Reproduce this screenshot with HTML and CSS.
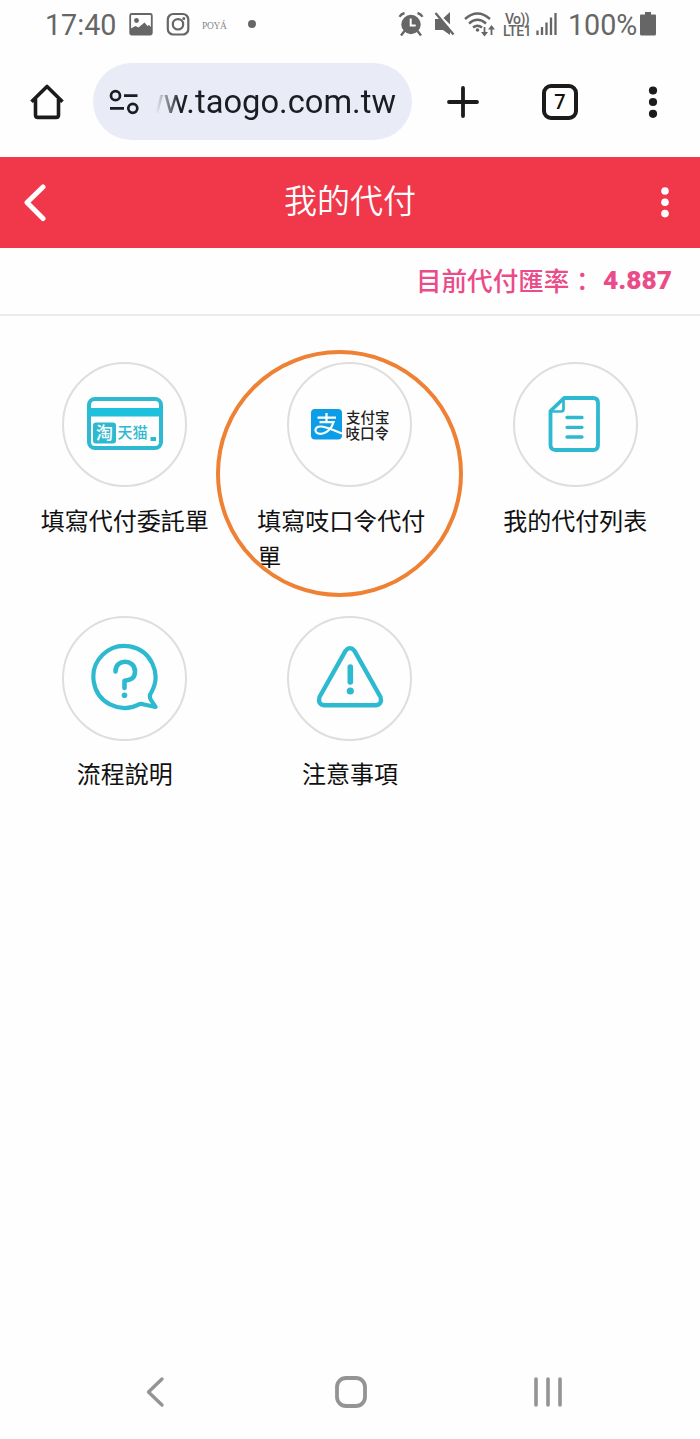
FILE: index.html
```html
<!DOCTYPE html>
<html lang="zh-Hant">
<head>
<meta charset="utf-8">
<title>我的代付</title>
<link rel="stylesheet" href="styles.css">
</head>
<body>
<div class="phone">
  <div class="status">
    <span class="clock">17:40</span>
    <svg class="s-image" width="24" height="24" viewBox="0 0 24 24"><rect x="1.2" y="2" width="21.6" height="20.6" rx="1.5" fill="none" stroke="#666" stroke-width="1.8"/><circle cx="7.5" cy="8.5" r="2.4" fill="#666"/><path d="M1 17 6.500 14 9.500 15.500 15.500 10.500 18.500 14 20 13 23 16v6H1z" fill="#666"/></svg>
    <svg class="s-insta" width="24" height="24" viewBox="0 0 24 24"><rect x="1.800" y="2" width="20.500" height="20.500" rx="5.500" fill="none" stroke="#666" stroke-width="2.200"/><circle cx="12" cy="12.300" r="5.200" fill="none" stroke="#666" stroke-width="2.200"/><circle cx="17.800" cy="6.500" r="1.500" fill="#666"/></svg>
    <span class="poya">POYÁ</span>
    <span class="dot"></span>
    <span class="spacer"></span>
    <svg class="s-alarm" width="26" height="26" viewBox="0 0 26 26"><g fill="none" stroke="#666" stroke-width="2.400"><path d="M1.500 5.800Q3 3 6.500 2M24.500 5.800Q23 3 19.500 2M6.500 20 3 24.500M19.500 20l3.500 4.500"/></g><circle cx="13" cy="13.500" r="9.700" fill="#666"/><path d="M12.700 7.500v7h5" fill="none" stroke="#fff" stroke-width="2"/></svg>
    <svg class="s-mute" width="24" height="26" viewBox="0 0 24 26"><path d="M2 8h5l10 10v6l-7-5H2zM17 1v12.500L10.500 7z" fill="#666"/><path d="m2.500 2 18 21.500" stroke="#666" stroke-width="2.300"/></svg>
    <svg class="s-wifi" width="32" height="26" viewBox="0 0 32 26"><g fill="none" stroke="#666" stroke-width="2.400"><path d="M1 8Q13.500-3 26 8M5 12.500Q13.500 5 22 12.500M9 16.500q4.500-3.700 9 0"/><path d="M20.500 16v7M27.500 24v-7" stroke-width="1.800"/></g><circle cx="13.500" cy="19" r="1.800" fill="#666"/><path d="m17 21 3.500 4.500L24 21zM24 18.500 27.500 14l3.500 4.500z" fill="#666"/></svg>
    <span class="volte"><span>Vo))</span><span>LTE1</span></span>
    <svg class="s-signal" width="22" height="26" viewBox="0 0 22 26"><path d="M1.500 24v-4.500M6 24v-8M10.500 24V11.500M15 24V6.500M19.500 24V2" stroke="#666" stroke-width="2.300"/></svg>
    <span class="percent">100%</span>
    <svg class="s-battery" width="16" height="26" viewBox="0 0 16 26"><path d="M1 3.500h4V1h6v2.500h4a1 1 0 0 1 1 1V23a1.500 1.500 0 0 1-1.500 1.500h-13A1.500 1.500 0 0 1 0 23V4.500a1 1 0 0 1 1-1z" fill="#666"/></svg>
  </div>

  <div class="browser">
    <svg class="b-home" width="38" height="38" viewBox="0 0 38 38"><path d="M3.500 18.800 19 3.500l15.500 15.300M7.500 16v16q0 2.400 2.400 2.400h18.200q2.400 0 2.400-2.400V16" fill="none" stroke="#1b1b1b" stroke-width="3.600" stroke-linejoin="round"/></svg>
    <div class="address">
      <svg width="30" height="26" viewBox="0 0 30 26"><g fill="none" stroke="#1b1d24" stroke-width="2.700"><circle cx="6.500" cy="6.700" r="4.500"/><circle cx="23.800" cy="19.300" r="4.500"/><path d="M15 6.700h13.500M1 19.300h14"/></g></svg>
      <span class="url">www.taogo.com.tw</span>
    </div>
    <svg class="b-plus" width="32" height="32" viewBox="0 0 32 32"><path d="M16 2v28M2 16h28" stroke="#1b1b1b" stroke-width="3.800" stroke-linecap="round"/></svg>
    <span class="tabs">7</span>
    <svg class="b-more" width="10" height="34" viewBox="0 0 10 34"><g fill="#1b1b1b"><circle cx="5" cy="5.500" r="4.100"/><circle cx="5" cy="17" r="4.100"/><circle cx="5" cy="28.800" r="4.100"/></g></svg>
  </div>

  <header class="title-bar">
    <svg width="24" height="40" viewBox="0 0 24 40"><path d="M21 4 5 19.500 21 35.500" fill="none" stroke="#fff" stroke-width="5" stroke-linecap="round" stroke-linejoin="round"/></svg>
    <h1>我的代付</h1>
    <svg width="10" height="34" viewBox="0 0 10 34"><g fill="#fff"><circle cx="5" cy="5" r="3.800"/><circle cx="5" cy="16.300" r="3.800"/><circle cx="5" cy="27.600" r="3.800"/></g></svg>
  </header>

  <div class="rate"><span>目前代付匯率：</span><b>4.887</b></div>

  <main class="menu">
    <div class="tile">
      <div class="disc">
        <svg width="76" height="58" viewBox="0 0 76 58"><rect x="2" y="3" width="72" height="49" rx="6" fill="none" stroke="#2dbad0" stroke-width="4"/><path d="M2 12h72v8.500H2z" fill="#1fc0dc"/><rect x="6" y="26.500" width="23" height="21" rx="3" fill="#2dbad0"/><text class="tao" x="9" y="43">淘</text><text class="tmall" x="30.500" y="42">天猫</text><path d="M63.500 41h5.500v4h-5.500z" fill="#2dbad0"/></svg>
      </div>
      <span class="label">填寫代付委託單</span>
    </div>
    <div class="tile">
      <div class="disc">
        <svg width="80" height="36" viewBox="0 0 80 36"><rect x="1" y="2" width="31" height="30.500" rx="4" fill="#0b9de5"/><path d="M7.500 10.700h18.500M16.500 6v9M9.500 15.200h14C22 20.500 17 26.800 10.500 26.800c-7 0-6.500-7.300 0-7.300 6 0 12 3.500 21.500 7" fill="none" stroke="#fff" stroke-width="2.200"/><text class="pay" x="36" y="15.700">支付宝</text><text class="pay" x="35.500" y="31.500">吱口令</text></svg>
      </div>
      <span class="label">填寫吱口令代付單</span>
    </div>
    <div class="tile">
      <div class="disc">
        <svg width="57" height="61" viewBox="0 0 57 61"><g fill="none" stroke="#2dbad0" stroke-width="3.800" stroke-linejoin="round" stroke-linecap="round"><path d="M17 4h29q5 0 5 5v42q0 5-5 5H8.500q-5 0-5-5V17z"/><path d="M16.500 5v10q0 2.500-2.500 2.500H5" stroke-width="2.700"/><path d="M20 23.500h15M20 33.300h15M20 43h15" stroke-width="3.300"/></g></svg>
      </div>
      <span class="label">我的代付列表</span>
    </div>
    <div class="tile">
      <div class="disc">
        <svg width="70" height="71" viewBox="0 0 70 71"><path d="M49 61.300A31 31 0 1 1 61.500 49Q58.500 53 61 57L65.500 64 54 61.500Q51 60.500 49 61.300Z" fill="none" stroke="#2dbad0" stroke-width="4.200" stroke-linejoin="round"/><path d="M25.500 28.500C25.500 15 45 16 45 28.500 45 36 40 37 34.500 37.800V45" fill="none" stroke="#2dbad0" stroke-width="4.600" stroke-linecap="round" stroke-linejoin="round"/><circle cx="34.500" cy="52.300" r="2.800" fill="#2dbad0"/></svg>
      </div>
      <span class="label">流程說明</span>
    </div>
    <div class="tile">
      <div class="disc">
        <svg width="70" height="67" viewBox="0 0 70 67"><path d="M30.500 5.800Q35 .5 39.500 5.800L65.500 52Q67.500 59.500 61 60.200H9Q2.500 59.500 4.500 52Z" fill="none" stroke="#2dbad0" stroke-width="4.400" stroke-linejoin="round"/><path d="M35.300 22v15" stroke="#2dbad0" stroke-width="5.600" stroke-linecap="round"/><circle cx="35.300" cy="46" r="3.600" fill="#2dbad0"/></svg>
      </div>
      <span class="label">注意事項</span>
    </div>
    <div class="highlight"></div>
  </main>

  <nav class="nav">
    <svg width="20" height="32" viewBox="0 0 20 32"><path d="M17 3 3.500 16 17 29" fill="none" stroke="#949494" stroke-width="3.400" stroke-linecap="round" stroke-linejoin="round"/></svg>
    <svg class="nav-home" width="32" height="32" viewBox="0 0 32 32"><rect x="2" y="2" width="28" height="28" rx="9" fill="none" stroke="#949494" stroke-width="3.800"/></svg>
    <svg width="30" height="32" viewBox="0 0 30 32"><path d="M3 3v26M15 3v26M27 3v26" stroke="#949494" stroke-width="3.600" stroke-linecap="round"/></svg>
  </nav>
</div>
</body>
</html>
```
FILE: styles.css
```css
* { box-sizing: border-box; }
body { margin: 0; background: #fefefe; color: #111; font-family: Roboto, "Noto Sans CJK TC", sans-serif; }
svg { display: block; flex: none; }
.phone { width: 700px; height: 1439px; display: flex; flex-direction: column; }

.status { height: 48px; padding: 0 44px 0 45px; display: flex; align-items: center; color: #666; white-space: nowrap; }
.clock, .percent { font-size: 28.700px; line-height: 48px; padding-top: 2px; }
.clock { width: 84px; }
.s-insta { margin-left: 13px; }
.poya { width: 27px; margin-left: 12px; padding-top: 3px; font: 9.500px "Liberation Serif", serif; letter-spacing: -0.3px; color: #888; }
.dot { width: 8px; height: 8px; margin-left: 19px; border-radius: 50%; background: #666; }
.spacer { flex: 1; }
.s-mute { margin-left: 9px; }
.s-wifi { margin-left: 7px; }
.volte { width: 30px; margin: 2px 0 0 6px; display: flex; flex-direction: column; align-items: center; font-size: 14px; line-height: 12px; font-weight: 500; letter-spacing: -0.6px; }
.s-signal { margin-left: 4px; }
.percent { width: 72px; margin-left: 10px; }

.browser { height: 109px; padding: 15px 42px 17px 28px; display: flex; align-items: center; }
.address { width: 319px; height: 77px; margin-left: 27px; padding: 0 16px; border-radius: 39px; background: #e9ecf6; display: flex; align-items: center; }
.url { flex: 1; height: 50px; margin-left: 17px; overflow: hidden; display: flex; justify-content: flex-end; font-size: 32.700px; line-height: 51px; color: #1b1d24; -webkit-mask-image: linear-gradient(90deg, transparent, #000 24px); mask-image: linear-gradient(90deg, transparent, #000 24px); }
.b-plus { margin-left: 35px; }
.tabs { width: 36px; height: 36px; margin-left: 63px; border: 4px solid #1b1b1b; border-radius: 9px; font-size: 20px; line-height: 28px; font-weight: 500; text-align: center; }
.b-more { margin-left: 70px; }

.title-bar { height: 91px; padding: 0 30px 0 22px; background: #f0384a; display: flex; align-items: center; justify-content: space-between; }
.title-bar h1 { flex: 1; margin: 0; padding: 0 6px 8px 0; text-align: center; color: #fff; font-size: 33px; font-weight: 350; }

.rate { height: 68px; padding: 0 28px 4px 0; border-bottom: 2px solid #ebebeb; display: flex; justify-content: flex-end; align-items: center; color: #ea4c89; font-size: 25.600px; font-weight: 700; white-space: nowrap; }
.rate span { font-weight: 500; }
.rate b { margin-left: 8px; padding-top: 2px; font-size: 26.300px; }

.menu { position: relative; flex: 1; padding: 46px 12px 0; display: grid; grid-template-columns: repeat(3, 1fr); row-gap: 39px; align-content: start; }
.tile { display: flex; flex-direction: column; align-items: center; padding: 0 20px; }
.disc { width: 125px; height: 125px; border: 2px solid #dedede; border-radius: 50%; display: flex; align-items: center; justify-content: center; }
.label { margin-top: 16.500px; font-size: 24px; line-height: 36.500px; }
.tao, .tmall { font-family: "Noto Sans CJK SC", sans-serif; font-weight: 500; }
.tao { font-size: 17px; fill: #fff; }
.tmall { font-size: 15px; fill: #2dbad0; }
.pay { font-family: "Noto Sans CJK SC", sans-serif; font-size: 14.500px; font-weight: 500; fill: #222; }
.highlight { position: absolute; left: 216px; top: 34px; width: 247px; height: 247px; border: 4px solid #ee8133; border-radius: 50%; }

.nav { height: 94px; padding: 0 137px 0 145px; display: flex; align-items: center; justify-content: space-between; }
.nav-home { margin-left: 4px; }
```
